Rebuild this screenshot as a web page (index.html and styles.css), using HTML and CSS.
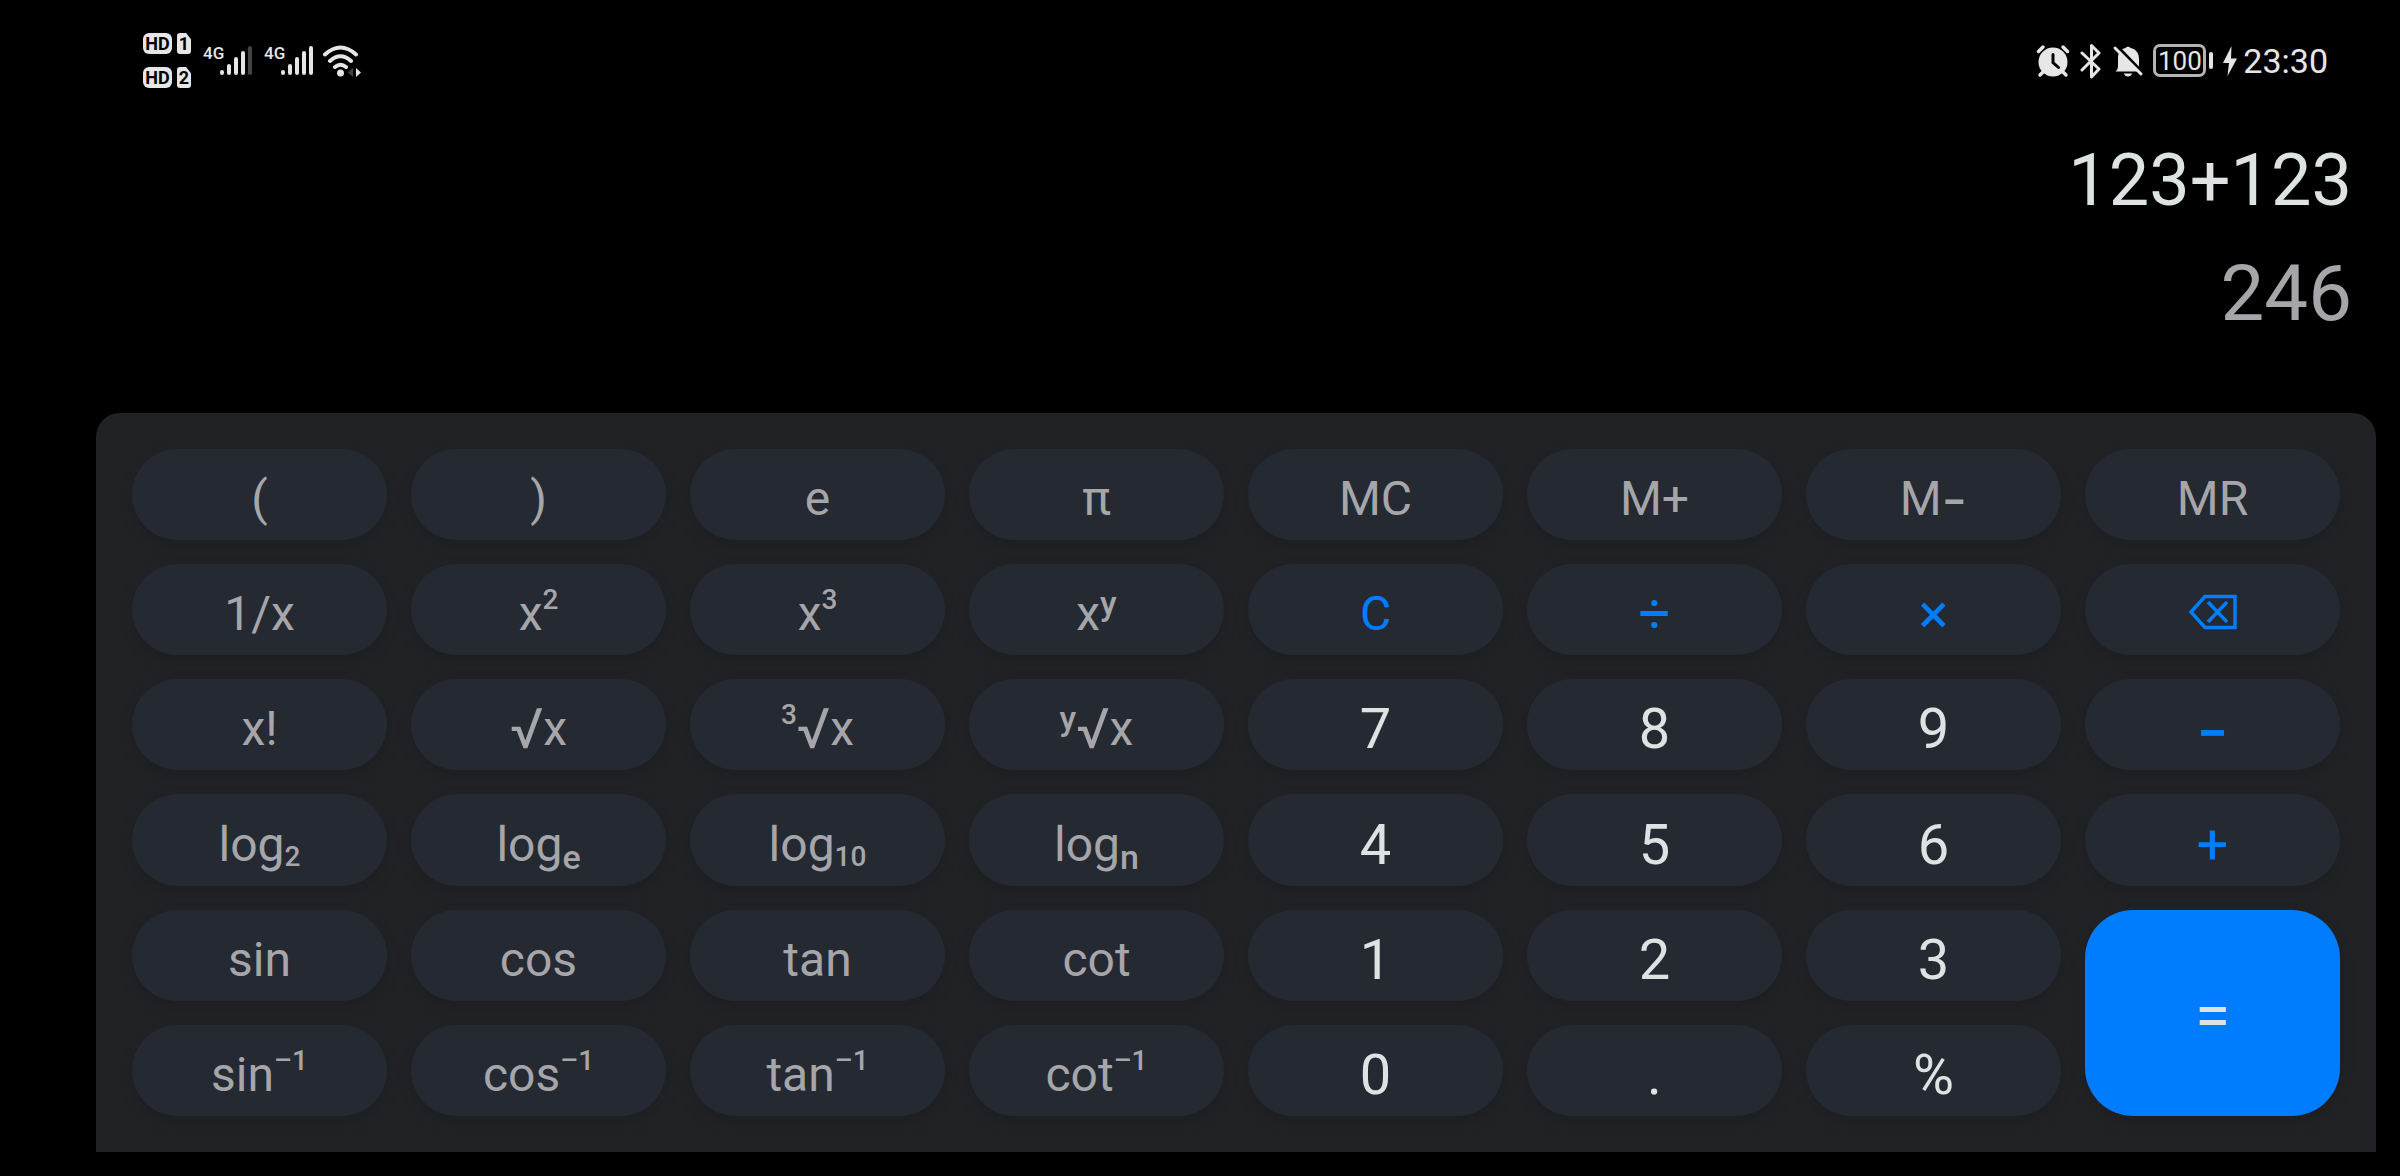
FILE: index.html
```html
<!DOCTYPE html>
<html lang="en">
<head>
<meta charset="utf-8">
<title>Calculator</title>
<meta name="viewport" content="width=device-width, initial-scale=1">
<link rel="stylesheet" href="styles.css">
</head>
<body>
<header class="status">
  <div class="status-group">
    <div class="sims">
      <div class="sim"><span class="hd">HD</span><span class="card">1</span></div>
      <div class="sim"><span class="hd">HD</span><span class="card">2</span></div>
    </div>
    <div class="signal">
      <span class="net">4G</span>
      <svg width="34" height="32" viewBox="0 0 34 32" fill="none" stroke="currentColor" stroke-width="4" stroke-linecap="round" aria-hidden="true"><path d="M3 27v1M10 21v7M17 14v14M24 8v20"/><path class="dim" d="M31 3v25"/></svg>
    </div>
    <div class="signal">
      <span class="net">4G</span>
      <svg width="34" height="32" viewBox="0 0 34 32" fill="none" stroke="currentColor" stroke-width="4" stroke-linecap="round" aria-hidden="true"><path d="M3 27v1M10 21v7M17 14v14M24 8v20M31 3v25"/></svg>
    </div>
    <svg class="wifi" width="40" height="34" viewBox="0 0 40 34" fill="none" stroke="currentColor" stroke-width="4" stroke-linecap="round" aria-hidden="true"><path d="M3 10.500Q18.500-3.500 34 10.500M8 17Q18.500 7.500 29 17M13 23Q18.500 18.500 24 23"/><circle cx="18.500" cy="29" r="3.500" fill="currentColor" stroke="none"/><path d="M34 24v9l5-4.500z" fill="currentColor" stroke="none"/><path class="dim-fill" d="M31 24v9l-5-4.500z" stroke="none"/></svg>
  </div>
  <div class="status-group status-right">
    <svg width="34" height="34" viewBox="0 0 34 34" fill="none" stroke="currentColor" stroke-width="3.500" stroke-linecap="round" aria-hidden="true"><circle cx="17" cy="18" r="14.500" fill="currentColor" stroke="none"/><path d="M2.500 7.500l4.500-4.500M31.500 7.500L27 3M7 28l-3 3M27 28l3 3"/><path d="M17 10.500v8l5.500 5" stroke="#000" stroke-width="3"/></svg>
    <svg width="24" height="36" viewBox="0 0 24 36" fill="none" stroke="currentColor" stroke-width="3" stroke-linejoin="round" stroke-linecap="round" aria-hidden="true"><path d="M3 10l17 16-7.500 8V2.500l7.500 7.500L3 27"/></svg>
    <svg width="32" height="34" viewBox="0 0 32 34" aria-hidden="true"><path fill="currentColor" d="M13.500 4a3 3 0 0 1 5 0C24 5 27 9.500 27 15v8l1.500 4.500h-25c2.500-2 2.500-4 2.500-7V14C6 9 8.500 5 13.500 4zM12 29.500h8c-.5 4-7.500 4-8 0z"/><path d="M4 1l28 29" stroke="#000" stroke-width="3"/><path d="M3 4l26 26" stroke="currentColor" stroke-width="3" stroke-linecap="round"/></svg>
    <div class="battery"><span class="level">100</span><span class="cap"></span></div>
    <div class="power">
      <svg width="16" height="32" viewBox="0 0 16 32" aria-hidden="true"><path fill="currentColor" d="M9.500 1L1 18h6L5.500 31 15 13.500H9z"/></svg>
      <time class="clock">23:30</time>
    </div>
  </div>
</header>
<main class="calculator">
  <section class="display" aria-label="Display">
    <div class="expression">123+123</div>
    <output class="result">246</output>
  </section>
  <section class="keypad" aria-label="Keypad">
    <button class="key">(</button>
    <button class="key">)</button>
    <button class="key">e</button>
    <button class="key">π</button>
    <button class="key">MC</button>
    <button class="key">M+</button>
    <button class="key">M<span class="minus">-</span></button>
    <button class="key">MR</button>

    <button class="key">1/x</button>
    <button class="key">x<sup class="digit">2</sup></button>
    <button class="key">x<sup class="digit">3</sup></button>
    <button class="key">x<sup>y</sup></button>
    <button class="key action">C</button>
    <button class="key operator">÷</button>
    <button class="key operator">×</button>
    <button class="key action" aria-label="Backspace"><svg class="backspace" width="50" height="36" viewBox="0 0 50 36" fill="none" stroke="currentColor" stroke-width="3.500" aria-hidden="true"><path d="M3 18L17 2.500h30v31H17zM20 8l19 20M39 8L20 28"/></svg></button>

    <button class="key">x!</button>
    <button class="key"><span class="root">√</span>x</button>
    <button class="key"><sup class="digit">3</sup><span class="root">√</span>x</button>
    <button class="key"><sup>y</sup><span class="root">√</span>x</button>
    <button class="key number">7</button>
    <button class="key number">8</button>
    <button class="key number">9</button>
    <button class="key operator"><span class="minus">-</span></button>

    <button class="key">log<sub class="digit">2</sub></button>
    <button class="key">log<sub>e</sub></button>
    <button class="key">log<sub class="digit">10</sub></button>
    <button class="key">log<sub>n</sub></button>
    <button class="key number">4</button>
    <button class="key number">5</button>
    <button class="key number">6</button>
    <button class="key operator">+</button>

    <button class="key">sin</button>
    <button class="key">cos</button>
    <button class="key">tan</button>
    <button class="key">cot</button>
    <button class="key number">1</button>
    <button class="key number">2</button>
    <button class="key number">3</button>
    <button class="key equals">=</button>

    <button class="key">sin<sup class="digit">–1</sup></button>
    <button class="key">cos<sup class="digit">–1</sup></button>
    <button class="key">tan<sup class="digit">–1</sup></button>
    <button class="key">cot<sup class="digit">–1</sup></button>
    <button class="key number">0</button>
    <button class="key number">.</button>
    <button class="key number">%</button>
  </section>
</main>
</body>
</html>
```
FILE: styles.css
```css
* { box-sizing: border-box; }

body {
  margin: 0;
  min-height: 100vh;
  display: flex;
  flex-direction: column;
  background: #000;
  color: #e6e6e6;
  font-family: Roboto, "Noto Sans", sans-serif;
}

svg { display: block; flex: none; }

/* Status bar */
.status {
  display: flex;
  justify-content: space-between;
  align-items: center;
  height: 121px;
  padding: 0 72px 0 143px;
}
.status-group { display: flex; align-items: center; }
.sims { display: grid; gap: 13px; margin-right: 12px; }
.sim { display: flex; gap: 5px; height: 21px; }
.hd, .card {
  height: 21px;
  background: #e6e6e6;
  border-radius: 6px;
  color: #000;
  font-size: 18px;
  font-weight: 700;
  line-height: 21px;
  text-align: center;
}
.hd { width: 29px; }
.card {
  width: 14px;
  border-radius: 3px;
  clip-path: polygon(0 0, 65% 0, 100% 30%, 100% 100%, 0 100%);
}
.signal { display: flex; align-items: flex-start; margin-right: 11px; }
.net {
  width: 16px;
  font-size: 17px;
  font-weight: 500;
  line-height: 16px;
}
.signal + .signal { margin-right: 8px; }
.dim { stroke: #444; }
.dim-fill { fill: #444; }

.status-right { gap: 9px; }
.battery { display: flex; align-items: center; gap: 3px; }
.level {
  width: 53px;
  height: 33px;
  border: 3px solid #b4b4b4;
  border-radius: 7px;
  font-size: 26px;
  line-height: 28px;
  text-align: center;
}
.cap { width: 4px; height: 17px; border-radius: 2px; background: currentColor; }
.power { display: flex; align-items: center; gap: 5px; }
.clock { font-size: 34px; line-height: 40px; }

/* Display and keypad */
.calculator { flex: 1; display: flex; flex-direction: column; }
.display { padding: 2px 48px 64px; text-align: right; }
.expression { color: #dde3e2; font-size: 72px; line-height: 116px; }
.result { display: block; color: #a6a6aa; font-size: 78px; line-height: 110px; }

.keypad {
  flex: 1;
  display: grid;
  grid-template-columns: repeat(8, 1fr);
  grid-template-rows: repeat(6, 1fr);
  gap: 24px;
  margin: 0 24px 24px 96px;
  padding: 36px;
  border-radius: 24px 24px 0 0;
  background: #212225;
}
.key {
  display: flex;
  justify-content: center;
  align-items: center;
  min-width: 0;
  min-height: 64px;
  padding: 9px 0 0;
  border: 0;
  border-radius: 48px;
  background: #252932;
  box-shadow: 0 6px 16px rgba(0, 0, 0, 0.12);
  color: #a6a6aa;
  font-family: inherit;
  font-size: 48px;
  line-height: 60px;
}
.key sup, .key sub { font-size: 34px; font-weight: 500; line-height: 36px; }
.key sup { padding-bottom: 22px; }
.key sub { padding-top: 24px; }
.key .digit { font-size: 28px; }
.key sup.digit { padding-bottom: 28px; }
.root { font-size: 56px; }
.minus { font-family: Inter, sans-serif; font-size: 56px; }
.number { color: #dde3e2; font-size: 56px; }
.action { color: #007dff; }
.operator { color: #007dff; font-size: 56px; }
.operator .minus { font-size: 72px; }
.backspace { margin-bottom: 4px; }
.equals {
  grid-column: 8;
  grid-row: 5 / span 2;
  background: #007dff;
  color: #dde3e2;
  font-size: 64px;
}
```
